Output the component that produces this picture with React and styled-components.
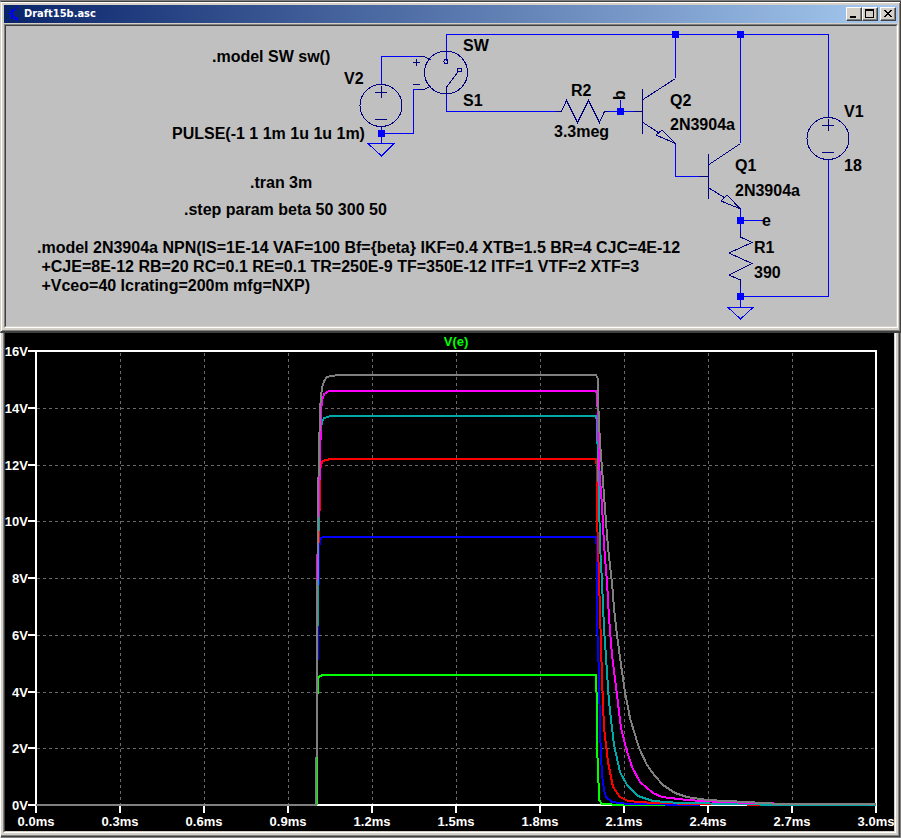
import React from "react";
import styled, { createGlobalStyle } from "styled-components";

const GlobalStyle = createGlobalStyle`
  * { box-sizing: border-box; }
  body { margin: 0; background: #808080; }
`;

const Page = styled.main`
  display: flex;
  flex-direction: column;
  padding-top: 1px;
  background: #808080;
`;

const DocumentWindow = styled.section`
  display: flex;
  flex-direction: column;
  gap: 1px;
  padding: 3px 2px 3px 3px;
  background: #d4d0c8;
  border-style: solid;
  border-width: 1px 1px 2px 1px;
  border-color: #404040 #404040 #404040 #d4d0c8;
  box-shadow: inset 1px 1px 0 #ffffff, inset -1px -1px 0 #808080;
`;

const PlotWindow = styled.section`
  padding: 0 4px 4px 2px;
  background: #d4d0c8;
  border-left: 1px solid #ffffff;
  border-right: 1px solid #808080;
  border-bottom: 1px solid #808080;
  box-shadow: inset -1px -1px 0 #404040, inset -2px -2px 0 #808080;
`;

const TitleBar = styled.header`
  display: flex;
  align-items: center;
  height: 18px;
  padding: 0 2px 0 4px;
  background: linear-gradient(to right, #0a246a, #a6caf0);
`;

const Title = styled.h1`
  flex: 1;
  margin: 0 0 0 4px;
  color: #ffffff;
  font: bold 11px/18px "DejaVu Sans Condensed", "DejaVu Sans", sans-serif;
`;

const WindowButtons = styled.div`
  display: flex;
`;

const WindowButton = styled.button`
  display: flex;
  width: 16px;
  height: 14px;
  margin-left: ${(p) => (p.$separate ? 2 : 0)}px;
  padding: 0;
  background: #d4d0c8;
  border: 1px solid;
  border-color: #ffffff #404040 #404040 #ffffff;
  box-shadow: inset -1px -1px 0 #808080;
`;

const Canvas = styled.div`
  background: ${(p) => (p.$dark ? "#000000" : "#c0c0c0")};
  border: 1px solid;
  border-color: #808080 #ffffff #ffffff #808080;
  border-top-width: ${(p) => (p.$dark ? 0 : 1)}px;
`;

const CanvasEdge = styled.div`
  border: 1px solid;
  border-color: #404040 #d4d0c8 #d4d0c8 #404040;
  border-top-width: ${(p) => (p.$dark ? 0 : 1)}px;
`;

const Drawing = styled.svg`
  display: block;
  width: 100%;
  height: auto;
`;

const Wire = styled.path`
  fill: none;
  stroke: #0000ff;
  shape-rendering: crispEdges;
`;

const Part = styled.path`
  fill: none;
  stroke: #000080;
  shape-rendering: crispEdges;
`;

const Body = styled.circle`
  fill: none;
  stroke: #000080;
  shape-rendering: crispEdges;
`;

const Junction = styled.rect`
  fill: #0000ff;
  shape-rendering: crispEdges;
`;

const Label = styled.text`
  fill: #000000;
  font: bold 16px "Liberation Sans", Arial, sans-serif;
  white-space: pre;
`;

const AxisLabel = styled.text`
  fill: ${(p) => (p.$trace ? "#00ff00" : "#ffffff")};
  font: bold 13px "Liberation Sans", Arial, sans-serif;
  text-anchor: ${(p) => (p.$end ? "end" : "middle")};
`;

const GridLine = styled.path`
  stroke: #696969;
  stroke-dasharray: 3 3;
  shape-rendering: crispEdges;
`;

const AxisLine = styled.path`
  fill: none;
  stroke: #ffffff;
  stroke-width: 2px;
  shape-rendering: crispEdges;
`;

const Trace = styled.polyline`
  fill: none;
  stroke: ${(p) => p.$color};
  stroke-width: 2px;
  shape-rendering: crispEdges;
`;

const junctions = [
  [675, 34], [740, 34], [620, 111], [381, 133], [740, 220], [740, 296],
];

const labels = [
  [212, 62, ".model SW sw()"],
  [344, 84, "V2"],
  [463, 51, "SW"],
  [463, 106, "S1"],
  [172, 139, "PULSE(-1 1 1m 1u 1u 1m)"],
  [571, 96, "R2"],
  [554, 137, "3.3meg"],
  [670, 106, "Q2"],
  [670, 130, "2N3904a"],
  [735, 171, "Q1"],
  [735, 196, "2N3904a"],
  [844, 117, "V1"],
  [844, 171, "18"],
  [762, 226, "e"],
  [754, 253, "R1"],
  [754, 278, "390"],
  [250, 188, ".tran 3m"],
  [184, 215, ".step param beta 50 300 50"],
  [37, 253, ".model 2N3904a NPN(IS=1E-14 VAF=100 Bf={beta} IKF=0.4 XTB=1.5 BR=4 CJC=4E-12"],
  [37, 272, " +CJE=8E-12 RB=20 RC=0.1 RE=0.1 TR=250E-9 TF=350E-12 ITF=1 VTF=2 XTF=3"],
  [37, 291, " +Vceo=40 Icrating=200m mfg=NXP)"],
];

const wires = [
  "M446.5 61V34.5H828.5V117",
  "M675.5 34V78M740.5 34V143",
  "M381.5 84V56.5H419",
  "M381.5 127V143M381 133.5H413.5V89.5H418",
  "M446.5 94V111.5H556",
  "M608 111.5H633M620.5 111V100",
  "M675.5 143V176.5H699",
  "M740.5 209V231M740 220.5H765",
  "M740.5 287V307M740 296.5H828.5V160",
  "M368 143.5H394L381.5 156Z",
  "M728 307.5H753L740.5 319Z",
];

const parts = [
  "M419 56.5H424L431 60M418 89.5H424L431 86",
  "M413 62.5H420M416.5 59V66M413 84.5H420",
  "M446.5 94V87L458 72",
  "M375 92.5H387M381.5 86V98M375 119.5H387",
  "M556 111.5H561.5L566.5 100.5L577.5 122.5L588.5 100.5L599.5 122.5L604.5 111.5H608",
  "M633 111.5H642M642.5 89V134M643 99.5L675.5 78.5M643 122.5L659 133M675.5 143.5L662 130L656 135Z",
  "M699 176.5H708M708.5 154V199M709 164.5L740.5 143.5M709 188L725 198M740.5 209L727 195L721 201Z",
  "M740.5 231V237L752 242.5L729 253L752 263.5L729 275L740.5 280V287",
  "M822 125.5H834M828.5 119V131M822 152.5H834",
];

const xTicks = Array.from({ length: 11 }, (_, i) => ({
  x: 36 + 84 * i,
  text: `${(i * 0.3).toFixed(1)}ms`,
}));

const yTicks = [
  [351, 16], [408, 14], [465, 12], [521, 10], [578, 8], [635, 6], [692, 4], [748, 2], [805, 0],
];

const traces = [
  {
    color: "#00ff00",
    points: "317,805 317,700 318,688 318,679 319,677 322,675 595,675 596,675 596,683 597,700 597,750 598,765 599,800 602,804 622,805 680,805",
  },
  {
    color: "#0000ff",
    points: "317,700 318,624 319,550 320,541 321,538 323,537 596,537 597,550 597,622 599,675 600,732 602,775 604,790 606,797 612,802 628,804 700,805",
  },
  {
    color: "#ff0000",
    points: "317,700 318,560 320,495 320,470 322,462 325,460 332,459 596,459 597,468 597,518 598,545 600,612 602,678 604,728 608,762 613,787 620,797 628,801 653,803 700,804 792,805",
  },
  {
    color: "#00a8a8",
    points: "317,700 318,560 320,448 321,428 322,422 324,418 331,416 596,416 597,422 598,465 599,498 600,545 602,582 604,628 607,672 609,702 614,745 620,772 627,785 638,796 653,801 680,803 740,804 780,805 876,805",
  },
  {
    color: "#ff00ff",
    points: "317,700 317,572 319,500 321,421 321,411 322,401 324,394 329,391 596,391 597,394 598,420 599,460 600,480 602,505 604,545 607,582 609,618 612,655 617,695 621,728 626,748 632,767 640,782 653,793 662,797 687,800 720,802 792,804 870,804",
  },
  {
    color: "#808080",
    points: "36,805 316,805 316,765 317,750 317,600 318,560 318,500 319,454 320,410 321,397 322,388 324,381 327,377 331,376 340,375 596,375 598,379 598,400 599,421 600,443 602,468 604,495 606,522 608,547 610,565 612,583 614,608 617,635 621,665 625,692 630,718 639,748 647,765 655,776 663,785 675,793 687,797 707,800 727,801 747,802 780,804 876,804",
  },
];

function TransistorIcon() {
  return (
    <svg width="12" height="16" viewBox="0 0 12 16" aria-hidden="true">
      <g fill="none" stroke="#0000ff" shapeRendering="crispEdges">
        <path d="M4 3v10" strokeWidth="2" />
        <path d="M0 7.5h4M5 5.5L10 0M5 9.5l5 5M6 13.5h4M9.5 11v4" />
      </g>
    </svg>
  );
}

function Glyph({ d, width = 2 }) {
  return (
    <svg width="14" height="12" viewBox="0 0 14 12" aria-hidden="true">
      <path d={d} stroke="#000000" strokeWidth={width} fill="none" shapeRendering="crispEdges" />
    </svg>
  );
}

function Schematic() {
  return (
    <Drawing viewBox="6 26 890 300" role="img" aria-label="Darlington switch schematic">
      {wires.map((d) => <Wire key={d} d={d} />)}
      {parts.map((d) => <Part key={d} d={d} />)}
      <Body cx="381" cy="105.5" r="21" />
      <Body cx="446" cy="72.5" r="21.5" />
      <Body cx="828" cy="138.5" r="21" />
      <Body cx="446" cy="61.5" r="2" />
      <Body cx="459.5" cy="70" r="2" />
      {junctions.map(([x, y]) => (
        <Junction key={`${x}-${y}`} x={x - 3} y={y - 3} width="7" height="7" />
      ))}
      {labels.map(([x, y, text]) => (
        <Label key={`${x}-${y}`} x={x} y={y}>{text}</Label>
      ))}
      <Label transform="translate(625 100) rotate(-90)">b</Label>
    </Drawing>
  );
}

function Waveform() {
  return (
    <Drawing viewBox="5 333 889 498" role="img" aria-label="Voltage at node e against time">
      {xTicks.slice(1, -1).map(({ x }) => (
        <GridLine key={x} d={`M${x}.5 353V804`} />
      ))}
      {yTicks.slice(1, -1).map(([y]) => (
        <GridLine key={y} d={`M37 ${y}.5H875`} />
      ))}
      <AxisLine d="M36 351H876V805H36Z" />
      {xTicks.map(({ x }) => <AxisLine key={x} d={`M${x} 805V813`} />)}
      {yTicks.map(([y]) => <AxisLine key={y} d={`M28 ${y}H36`} />)}
      {traces.map((t) => <Trace key={t.color} $color={t.color} points={t.points} />)}
      {xTicks.map(({ x, text }) => (
        <AxisLabel key={x} x={x} y="826">{text}</AxisLabel>
      ))}
      {yTicks.map(([y, volts]) => (
        <AxisLabel key={y} $end x="28" y={y + 5}>{`${volts}V`}</AxisLabel>
      ))}
      <AxisLabel $trace x="456" y="346">V(e)</AxisLabel>
    </Drawing>
  );
}

export default function App() {
  return (
    <>
      <GlobalStyle />
      <Page>
        <DocumentWindow>
          <TitleBar>
            <TransistorIcon />
            <Title>Draft15b.asc</Title>
            <WindowButtons>
              <WindowButton aria-label="Minimize"><Glyph d="M3 9H9" /></WindowButton>
              <WindowButton aria-label="Maximize"><Glyph width={1} d="M2 2H11M2.5 1V10M10.5 1V10M2 1.5H11M2 9.5H11" /></WindowButton>
              <WindowButton aria-label="Close" $separate><Glyph d="M3.5 2L10.5 9M10.5 2L3.5 9" /></WindowButton>
            </WindowButtons>
          </TitleBar>
          <Canvas>
            <CanvasEdge><Schematic /></CanvasEdge>
          </Canvas>
        </DocumentWindow>
        <PlotWindow>
          <Canvas $dark>
            <CanvasEdge $dark><Waveform /></CanvasEdge>
          </Canvas>
        </PlotWindow>
      </Page>
    </>
  );
}
